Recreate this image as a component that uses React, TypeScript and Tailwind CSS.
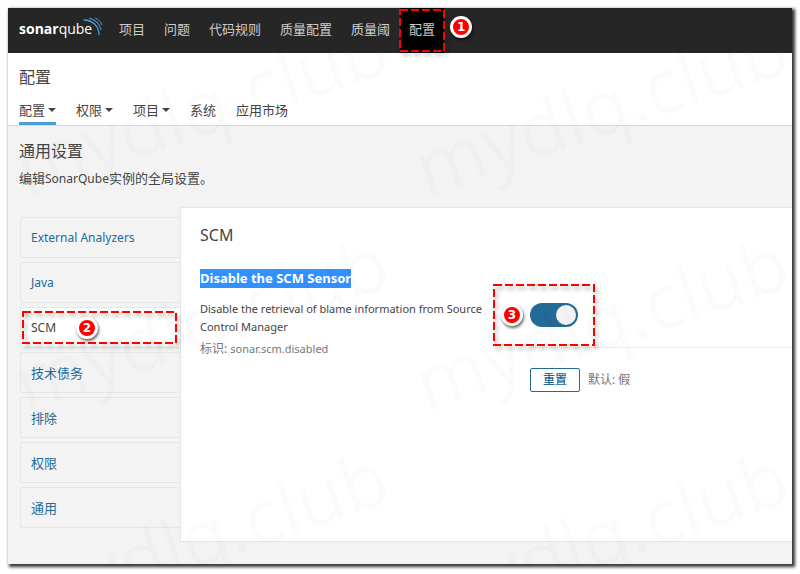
import { useState, type ReactNode } from 'react';

const navItems = ['项目', '问题', '代码规则', '质量配置', '质量阈', '配置'];

const tabs = [
  { label: '配置', menu: true },
  { label: '权限', menu: true },
  { label: '项目', menu: true },
  { label: '系统', menu: false },
  { label: '应用市场', menu: false },
];

const categories = [
  { name: 'External Analyzers', className: 'text-[12px] text-[#236a97]' },
  { name: 'Java', className: 'text-[12px] text-[#236a97]' },
  { name: 'SCM', className: 'bg-white text-[12px] text-[#444]' },
  { name: '技术债务', className: 'text-[#236a97]' },
  { name: '排除', className: 'text-[#236a97]' },
  { name: '权限', className: 'text-[#236a97]' },
  { name: '通用', className: 'text-[#236a97]' },
];

function Logo() {
  return (
    <a href="#home" aria-label="sonarqube" className="mr-2 flex w-[83px] shrink-0 items-center pb-1 text-[14px] leading-5 text-white">
      <span className="font-['Open_Sans','Noto_Sans',sans-serif] font-bold">sonar</span>
      <span className="font-['Open_Sans','Noto_Sans',sans-serif]">qube</span>
      <svg viewBox="0 0 20 20" className="-ml-[9px] mb-1 size-5 shrink-0 overflow-visible" fill="none" stroke="#4b9fd5" strokeLinecap="round">
        <path d="M1 3C9 3 16 9 16 17.500" strokeWidth="1.300" />
        <path d="M6.500 1.300C12.500 3 16.800 7.500 18 12.500" strokeWidth="1.100" />
        <path d="M12.500 1C15.300 2.500 17.500 4.600 18.800 7.500" strokeWidth="1" />
      </svg>
    </a>
  );
}

function Highlight({ className }: { className: string }) {
  return (
    <svg aria-hidden="true" className={`pointer-events-none absolute overflow-visible drop-shadow-[2px_3px_2px_rgba(0,0,0,0.35)] ${className}`}>
      <rect width="100%" height="100%" fill="none" stroke="#f00" strokeWidth="2" strokeDasharray="8 3" />
    </svg>
  );
}

function Step({ className, children }: { className: string; children: ReactNode }) {
  return (
    <span className={`absolute flex size-[22px] items-center justify-center rounded-full border-[3px] border-white bg-[#f00] font-['DejaVu_Sans',sans-serif] text-[12px] leading-4 font-bold text-white shadow-[1px_2px_3px_rgba(0,0,0,0.6)] ${className}`}>
      {children}
    </span>
  );
}

function Watermark() {
  return (
    <div aria-hidden="true" className="pointer-events-none absolute inset-0 overflow-hidden">
      <svg className="h-full w-full select-none">
        {[0, 1, 2].map((row) =>
          [0, 1].map((col) => (
            <text
              key={`${row}-${col}`}
              transform={`translate(${18 + col * 400} ${189 + row * 215}) rotate(-19)`}
              className="fill-black/[0.014] font-['Open_Sans','Noto_Sans',sans-serif] text-[76px]"
            >
              mydlq.club
            </text>
          )),
        )}
      </svg>
    </div>
  );
}

export default function App() {
  const [disabled, setDisabled] = useState(true);

  return (
    <div className="bg-white px-2 pt-2 pb-[10px] font-['Noto_Sans','Noto_Sans_CJK_SC',sans-serif] text-[13px] leading-5 text-[#444]">
      <div className="relative bg-[#f3f3f3] shadow-[2px_2px_3px_1px_rgba(0,0,0,0.8)]">
        <nav className="flex h-[45px] items-stretch bg-[#262626] pl-[11px] text-[#ccc]">
          <Logo />
          <div className="flex gap-px">
            {navItems.map((item) => {
              const active = item === '配置';
              return (
                <a
                  key={item}
                  href="#nav"
                  className={`relative flex items-center px-[9px] pb-[3px] ${active ? 'bg-black' : ''}`}
                >
                  <span className="whitespace-nowrap">{item}</span>
                  {active && <Highlight className="left-0 top-[2px] h-[41px] w-full" />}
                  {active && <Step className="-right-7 top-2">1</Step>}
                </a>
              );
            })}
          </div>
        </nav>

        <header className="border-b border-[#b9e4ec] bg-white px-[11px] pt-[13px]">
          <h1 className="text-[16px] leading-[22px]">配置</h1>
          <div className="mt-[11px] flex gap-5">
            {tabs.map((tab, i) => (
              <a
                key={tab.label}
                href="#tab"
                className={`flex items-center gap-[3px] border-b-3 pt-px pb-[2px] ${i === 0 ? 'border-[#4b9fd5]' : 'border-transparent'}`}
              >
                {tab.label}
                {tab.menu && (
                  <svg viewBox="0 0 8 4" className="h-1 w-2" fill="currentColor">
                    <path d="M0 0h8L4 4z" />
                  </svg>
                )}
              </a>
            ))}
          </div>
        </header>

        <main className="pt-[14px] pb-[22px]">
          <div className="px-[11px]">
            <h2 className="text-[16px] leading-[22px]">通用设置</h2>
            <p className="mt-[6px]">
              编辑<span className="text-[12px] leading-4">SonarQube</span>实例的全局设置。
            </p>
          </div>

          <div className="mt-[19px] flex items-stretch pl-3">
            <ul className="mt-[10px] flex w-40 shrink-0 flex-col gap-1">
              {categories.map(({ name, className }) => (
                <li key={name} className="relative">
                  <a
                    href="#category"
                    className={`block h-[41px] rounded-l-xs border border-r-0 border-[#e6e6e6] p-[10px] leading-5 ${className}`}
                  >
                    {name}
                  </a>
                  {name === 'SCM' && <Highlight className="left-[3px] top-[5px] h-[31px] w-[153px]" />}
                  {name === 'SCM' && <Step className="left-14 top-[10px]">2</Step>}
                </li>
              ))}
            </ul>

            <section className="min-h-[335px] min-w-0 flex-1 border-y border-l border-[#e6e6e6] bg-white pt-4 pl-[19px]">
              <h3 className="text-[16px] leading-[22px]">SCM</h3>
              <div className="mt-[23px] flex">
                <div className="w-[290px] shrink-0">
                  <h4 className="leading-[19px] font-bold text-white">
                    <span className="inline-block bg-[#3390ff]">Disable the SCM Sensor</span>
                  </h4>
                  <p className="mt-3 text-[11px] leading-[18px]">
                    Disable the retrieval of blame information from Source Control Manager
                  </p>
                  <p className="mt-1 text-[12px] leading-[18px] text-[#777]">
                    标识: <span className="text-[11px] leading-4">sonar.scm.disabled</span>
                  </p>
                </div>
                <div className="ml-10 flex-1 pt-[34px]">
                  <div className="relative h-[45px] border-b border-dotted border-[#ddd]">
                    <input
                      type="checkbox"
                      role="switch"
                      aria-label="Disable the SCM Sensor"
                      checked={disabled}
                      onChange={() => setDisabled(!disabled)}
                      className="block h-6 w-12 appearance-none rounded-full bg-[#ccc] p-[2px] before:block before:size-5 before:rounded-full before:bg-[#f3f3f3] checked:bg-[#236a97] checked:before:ml-6"
                    />
                    <Highlight className="-left-9 -top-[18px] h-[60px] w-[100px]" />
                    <Step className="-left-[29px] top-px">3</Step>
                  </div>
                  <div className="mt-5 flex items-center gap-2 text-[12px]">
                    <button type="button" className="h-6 w-[50px] rounded-xs border border-[#236a97] leading-5 font-medium text-[#236a97]">
                      重置
                    </button>
                    <span className="text-[#777]">默认: 假</span>
                  </div>
                </div>
              </div>
            </section>
          </div>
        </main>

        <Watermark />
      </div>
    </div>
  );
}
